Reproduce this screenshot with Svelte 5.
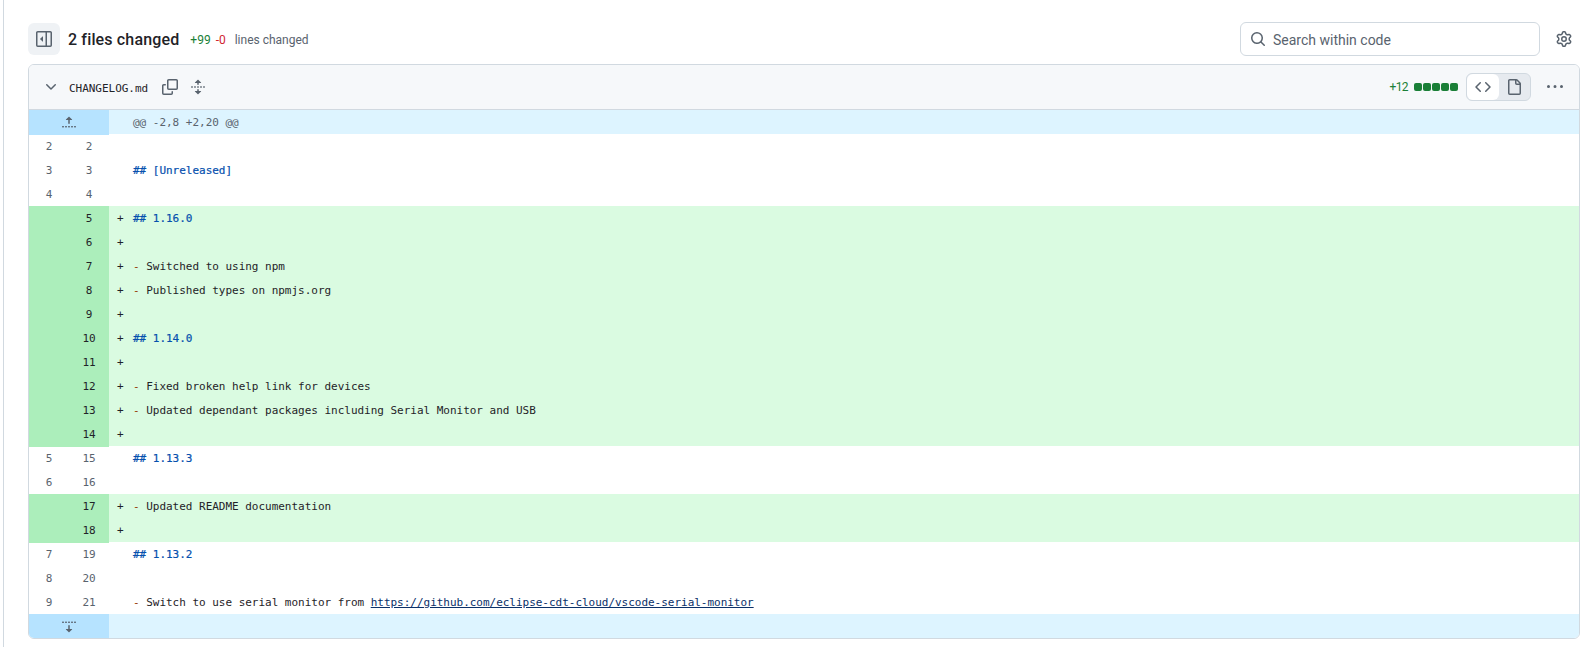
<script>
  const sidebar = 'M4.177 7.823 6.573 5.427A.25.25 0 0 1 7 5.604v4.792a.25.25 0 0 1-.427.177L4.177 8.177a.25.25 0 0 1 0-.354ZM1.75 0h12.5C15.216 0 16 .784 16 1.75v12.5A1.75 1.75 0 0 1 14.25 16H1.75A1.75 1.75 0 0 1 0 14.25V1.75C0 .784.784 0 1.75 0ZM1.5 1.75v12.5c0 .138.112.25.25.25H9.5v-13H1.75a.25.25 0 0 0-.25.25ZM11 14.5h3.25a.25.25 0 0 0 .25-.25V1.75a.25.25 0 0 0-.25-.25H11Z';
  const chevron = 'M12.78 5.22a.749.749 0 0 1 0 1.06l-4.25 4.25a.749.749 0 0 1-1.06 0L3.22 6.28a.749.749 0 1 1 1.06-1.06L8 8.939l3.72-3.719a.749.749 0 0 1 1.06 0Z';
  const copy = 'M0 6.75C0 5.784.784 5 1.75 5h1.5a.75.75 0 0 1 0 1.5h-1.5a.25.25 0 0 0-.25.25v7.5c0 .138.112.25.25.25h7.5a.25.25 0 0 0 .25-.25v-1.5a.75.75 0 0 1 1.5 0v1.5A1.75 1.75 0 0 1 9.25 16h-7.5A1.75 1.75 0 0 1 0 14.25ZM5 1.75C5 .784 5.784 0 6.75 0h7.5C15.216 0 16 .784 16 1.75v7.5A1.75 1.75 0 0 1 14.25 11h-7.5A1.75 1.75 0 0 1 5 9.25Zm1.75-.25a.25.25 0 0 0-.25.25v7.5c0 .138.112.25.25.25h7.5a.25.25 0 0 0 .25-.25v-7.5a.25.25 0 0 0-.25-.25Z';
  const unfold = 'm8.177.677 2.896 2.896a.25.25 0 0 1-.177.427H8.75v1.25a.75.75 0 0 1-1.5 0V4H5.104a.25.25 0 0 1-.177-.427L7.823.677a.25.25 0 0 1 .354 0ZM7.25 10.75a.75.75 0 0 1 1.5 0V12h2.146a.25.25 0 0 1 .177.427l-2.896 2.896a.25.25 0 0 1-.354 0l-2.896-2.896A.25.25 0 0 1 5.104 12H7.25v-1.25Zm-5-2a.75.75 0 0 0 0-1.5h-.5a.75.75 0 0 0 0 1.5h.5ZM6 8a.75.75 0 0 1-.75.75h-.5a.75.75 0 0 1 0-1.5h.5A.75.75 0 0 1 6 8Zm2.25.75a.75.75 0 0 0 0-1.5h-.5a.75.75 0 0 0 0 1.5h.5ZM12 8a.75.75 0 0 1-.75.75h-.5a.75.75 0 0 1 0-1.5h.5A.75.75 0 0 1 12 8Zm2.25.75a.75.75 0 0 0 0-1.5h-.5a.75.75 0 0 0 0 1.5h.5Z';
  const foldUp = 'M7.823 1.677 4.927 4.573A.25.25 0 0 0 5.104 5H7.25v3.236a.75.75 0 1 0 1.5 0V5h2.146a.25.25 0 0 0 .177-.427L8.177 1.677a.25.25 0 0 0-.354 0ZM13.75 11a.75.75 0 0 0 0 1.5h.5a.75.75 0 0 0 0-1.5h-.5Zm-3.75.75a.75.75 0 0 1 .75-.75h.5a.75.75 0 0 1 0 1.5h-.5a.75.75 0 0 1-.75-.75ZM7.75 11a.75.75 0 0 0 0 1.5h.5a.75.75 0 0 0 0-1.5h-.5ZM4 11.75a.75.75 0 0 1 .75-.75h.5a.75.75 0 0 1 0 1.5h-.5a.75.75 0 0 1-.75-.75ZM1.75 11a.75.75 0 0 0 0 1.5h.5a.75.75 0 0 0 0-1.5h-.5Z';
  const foldDown = 'm8.177 14.323 2.896-2.896a.25.25 0 0 0-.177-.427H8.75V7.764a.75.75 0 1 0-1.5 0V11H5.104a.25.25 0 0 0-.177.427l2.896 2.896a.25.25 0 0 0 .354 0ZM2.25 5a.75.75 0 0 0 0-1.5h-.5a.75.75 0 0 0 0 1.5h.5ZM6 4.25a.75.75 0 0 1-.75.75h-.5a.75.75 0 0 1 0-1.5h.5a.75.75 0 0 1 .75.75ZM8.25 5a.75.75 0 0 0 0-1.5h-.5a.75.75 0 0 0 0 1.5h.5ZM12 4.25a.75.75 0 0 1-.75.75h-.5a.75.75 0 0 1 0-1.5h.5a.75.75 0 0 1 .75.75Zm2.25.75a.75.75 0 0 0 0-1.5h-.5a.75.75 0 0 0 0 1.5h.5Z';
  const search = 'M10.68 11.74a6 6 0 0 1-7.922-8.982 6 6 0 0 1 8.982 7.922l3.04 3.04a.749.749 0 0 1-.326 1.275.749.749 0 0 1-.734-.215ZM11.5 7a4.499 4.499 0 1 0-8.997 0A4.499 4.499 0 0 0 11.5 7Z';
  const gear = 'M8 0a8.2 8.2 0 0 1 .701.031C9.444.095 9.99.645 10.16 1.29l.288 1.107c.018.066.079.158.212.224.231.114.454.243.668.386.123.082.233.09.299.071l1.103-.303c.644-.176 1.392.021 1.82.63.27.385.506.792.704 1.218.315.675.111 1.422-.364 1.891l-.814.806c-.049.048-.098.147-.088.294.016.257.016.515 0 .772-.01.147.038.246.088.294l.814.806c.475.469.679 1.216.364 1.891a7.977 7.977 0 0 1-.704 1.217c-.428.61-1.176.807-1.82.63l-1.102-.302c-.067-.019-.177-.011-.3.071a5.909 5.909 0 0 1-.668.386c-.133.066-.194.158-.211.224l-.29 1.106c-.168.646-.715 1.196-1.458 1.26a8.006 8.006 0 0 1-1.402 0c-.743-.064-1.289-.614-1.458-1.26l-.289-1.106c-.018-.066-.079-.158-.212-.224a5.738 5.738 0 0 1-.668-.386c-.123-.082-.233-.09-.299-.071l-1.103.303c-.644.176-1.392-.021-1.82-.63a8.12 8.12 0 0 1-.704-1.218c-.315-.675-.111-1.422.363-1.891l.815-.806c.05-.048.098-.147.088-.294a6.214 6.214 0 0 1 0-.772c.01-.147-.038-.246-.088-.294l-.815-.806C.635 6.045.431 5.298.746 4.623a7.92 7.92 0 0 1 .704-1.217c.428-.61 1.176-.807 1.82-.63l1.102.302c.067.019.177.011.3-.071.214-.143.437-.272.668-.386.133-.066.194-.158.211-.224l.29-1.106C6.009.645 6.556.095 7.299.03 7.53.01 7.764 0 8 0Zm-.571 1.525c-.036.003-.108.036-.137.146l-.289 1.105c-.147.561-.549.967-.998 1.189-.173.086-.34.183-.5.29-.417.278-.97.423-1.529.27l-1.103-.303c-.109-.03-.175.016-.195.045-.22.312-.412.644-.573.99-.014.031-.021.11.059.19l.815.806c.411.406.562.957.53 1.456a4.709 4.709 0 0 0 0 .582c.032.499-.119 1.05-.53 1.456l-.815.806c-.081.08-.073.159-.059.19.162.346.353.677.573.989.02.03.085.076.195.046l1.102-.303c.56-.153 1.113-.008 1.53.27.161.107.328.204.501.29.447.222.85.629.997 1.189l.289 1.105c.029.109.101.143.137.146a6.6 6.6 0 0 0 1.142 0c.036-.003.108-.036.137-.146l.289-1.105c.147-.561.549-.967.998-1.189.173-.086.34-.183.5-.29.417-.278.97-.423 1.529-.27l1.103.303c.109.029.175-.016.195-.045.22-.313.411-.644.573-.99.014-.031.021-.11-.059-.19l-.815-.806c-.411-.406-.562-.957-.53-1.456a4.709 4.709 0 0 0 0-.582c-.032-.499.119-1.05.53-1.456l.815-.806c.081-.08.073-.159.059-.19a6.464 6.464 0 0 0-.573-.989c-.02-.03-.085-.076-.195-.046l-1.102.303c-.56.153-1.113.008-1.53-.27a4.44 4.44 0 0 0-.501-.29c-.447-.222-.85-.629-.997-1.189l-.289-1.105c-.029-.11-.101-.143-.137-.146a6.6 6.6 0 0 0-1.142 0ZM11 8a3 3 0 1 1-6 0 3 3 0 0 1 6 0ZM9.5 8a1.5 1.5 0 1 0-3.001.001A1.5 1.5 0 0 0 9.5 8Z';
  const code = 'm11.28 3.22 4.25 4.25a.75.75 0 0 1 0 1.06l-4.25 4.25a.749.749 0 0 1-1.275-.326.749.749 0 0 1 .215-.734L13.94 8l-3.72-3.72a.749.749 0 0 1 .326-1.275.749.749 0 0 1 .734.215Zm-6.56 0a.751.751 0 0 1 1.042.018.751.751 0 0 1 .018 1.042L2.06 8l3.72 3.72a.749.749 0 0 1-.326 1.275.749.749 0 0 1-.734-.215L.47 8.53a.75.75 0 0 1 0-1.06Z';
  const file = 'M2 1.75C2 .784 2.784 0 3.75 0h6.586c.464 0 .909.184 1.237.513l2.914 2.914c.329.328.513.773.513 1.237v9.586A1.75 1.75 0 0 1 13.25 16h-9.5A1.75 1.75 0 0 1 2 14.25Zm1.75-.25a.25.25 0 0 0-.25.25v12.5c0 .138.112.25.25.25h9.5a.25.25 0 0 0 .25-.25V6h-2.75A1.75 1.75 0 0 1 9 4.25V1.5Zm6.75.062V4.25c0 .138.112.25.25.25h2.688l-.011-.013-2.914-2.914-.013-.011Z';
  const kebab = 'M8 9a1.5 1.5 0 1 0 0-3 1.5 1.5 0 0 0 0 3ZM1.5 9a1.5 1.5 0 1 0 0-3 1.5 1.5 0 0 0 0 3Zm13 0a1.5 1.5 0 1 0 0-3 1.5 1.5 0 0 0 0 3Z';

  const rows = [
    { o: 2, n: 2 },
    { o: 3, n: 3, h: '## [Unreleased]' },
    { o: 4, n: 4 },
    { n: 5, add: true, h: '## 1.16.0' },
    { n: 6, add: true },
    { n: 7, add: true, li: 'Switched to using npm' },
    { n: 8, add: true, li: 'Published types on npmjs.org' },
    { n: 9, add: true },
    { n: 10, add: true, h: '## 1.14.0' },
    { n: 11, add: true },
    { n: 12, add: true, li: 'Fixed broken help link for devices' },
    { n: 13, add: true, li: 'Updated dependant packages including Serial Monitor and USB' },
    { n: 14, add: true },
    { o: 5, n: 15, h: '## 1.13.3' },
    { o: 6, n: 16 },
    { n: 17, add: true, li: 'Updated README documentation' },
    { n: 18, add: true },
    { o: 7, n: 19, h: '## 1.13.2' },
    { o: 8, n: 20 },
    { o: 9, n: 21, li: 'Switch to use serial monitor from ', link: 'https://github.com/eclipse-cdt-cloud/vscode-serial-monitor' }
  ];
</script>

{#snippet icon(d, cls = '')}
  <svg class="icon {cls}" viewBox="0 0 16 16" width="16" height="16" aria-hidden="true"><path d={d} /></svg>
{/snippet}

<div class="page">
  <div class="toolbar">
    <button class="sidebar-btn" aria-label="Collapse file tree">{@render icon(sidebar)}</button>
    <h2 class="title">2 files changed</h2>
    <div class="summary">
      <span class="plus">+99</span>
      <span class="minus">-0</span>
      <span class="lines">lines changed</span>
    </div>
    <div class="search">
      {@render icon(search)}
      <span class="placeholder">Search within code</span>
    </div>
    <button class="icon-btn" aria-label="Settings">{@render icon(gear)}</button>
  </div>

  <div class="card">
    <div class="file-head">
      <button class="head-btn" aria-label="Collapse file">{@render icon(chevron)}</button>
      <span class="filename">CHANGELOG.md</span>
      <div class="head-tools">
        <button class="head-btn" aria-label="Copy path">{@render icon(copy)}</button>
        <button class="head-btn" aria-label="Expand all">{@render icon(unfold)}</button>
      </div>
      <div class="head-right">
        <span class="count">+12</span>
        <div class="bars">
          {#each [1, 2, 3, 4, 5] as b (b)}<span class="bar"></span>{/each}
        </div>
        <div class="segmented">
          <button class="seg on" aria-label="Code view">{@render icon(code)}</button>
          <button class="seg" aria-label="File view">{@render icon(file)}</button>
        </div>
        <button class="icon-btn" aria-label="More options">{@render icon(kebab)}</button>
      </div>
    </div>

    <div class="diff">
      <div class="row hunk">
        <div class="expander">{@render icon(foldUp)}</div>
        <div class="code hunk-text">@@ -2,8 +2,20 @@</div>
      </div>
      {#each rows as r (r.n)}
        <div class="row" class:add={r.add}>
          <div class="num">{r.o ?? ''}</div>
          <div class="num">{r.n}</div>
          <div class="code">
            <span class="marker">{r.add ? '+' : ''}</span>{#if r.h}<span class="heading">{r.h}</span>{:else if r.li}<span class="dash">-</span> {r.li}{#if r.link}<a href={r.link}>{r.link}</a>{/if}{/if}
          </div>
        </div>
      {/each}
      <div class="row hunk">
        <div class="expander">{@render icon(foldDown)}</div>
        <div class="code"></div>
      </div>
    </div>
  </div>
</div>

<style>
  :global(body) {
    background: #fff;
    color: #1f2328;
    font-family: Roboto, "Open Sans", sans-serif;
  }
  button {
    border: 0;
    background: none;
    padding: 0;
    color: inherit;
    display: flex;
    align-items: center;
    justify-content: center;
  }
  .icon {
    fill: #59636e;
    display: block;
  }
  .page {
    margin-left: 3px;
    height: 647px;
    box-sizing: border-box;
    border-left: 1px solid #d1d9e0;
    padding: 22px 5px 0 24px;
  }
  .toolbar {
    display: flex;
    align-items: center;
    height: 34px;
    margin-bottom: 8px;
  }
  .sidebar-btn {
    width: 32px;
    height: 32px;
    border-radius: 6px;
    background: #eff2f5;
    margin-right: 8px;
  }
  .title {
    margin: 2px 11px 0 0;
    font-size: 16px;
    font-weight: 500;
    letter-spacing: 0.15px;
    line-height: 20px;
    white-space: nowrap;
  }
  .summary {
    display: flex;
    gap: 5px;
    margin-top: 2px;
    font-size: 12px;
    white-space: nowrap;
  }
  .plus { color: #1a7f37; }
  .minus { color: #d1242f; }
  .lines { color: #59636e; margin-left: 4px; }
  .search {
    margin-left: auto;
    width: 300px;
    height: 34px;
    box-sizing: border-box;
    border: 1px solid #d1d9e0;
    border-radius: 6px;
    display: flex;
    align-items: center;
    gap: 7px;
    padding-left: 9px;
    font-size: 14px;
    color: #59636e;
    margin-right: 8px;
  }
  .placeholder {
    margin-top: 2px;
  }
  .icon-btn {
    width: 32px;
    height: 32px;
  }
  .card {
    border: 1px solid #d1d9e0;
    border-radius: 6px;
    overflow: hidden;
  }
  .file-head {
    height: 44px;
    background: #f6f8fa;
    border-bottom: 1px solid #d1d9e0;
    display: flex;
    align-items: center;
    padding: 0 8px;
  }
  .head-btn {
    width: 28px;
    height: 28px;
  }
  .filename {
    font-family: "DejaVu Sans Mono", "Liberation Mono", monospace;
    font-size: 11px;
    letter-spacing: -0.03px;
    margin: 3px 8px 0 4px;
  }
  .head-tools {
    display: flex;
  }
  .head-right {
    margin-left: auto;
    display: flex;
    align-items: center;
    gap: 8px;
  }
  .count {
    font-size: 12px;
    letter-spacing: -0.6px;
    color: #1a7f37;
    margin-right: -2px;
  }
  .bars {
    display: flex;
    gap: 1px;
  }
  .bar {
    width: 8px;
    height: 8px;
    border-radius: 2px;
    background: #1a7f37;
  }
  .segmented {
    display: flex;
    width: 65px;
    height: 28px;
    box-sizing: border-box;
    border: 1px solid #d1d9e0;
    border-radius: 6px;
    background: #e6eaef;
  }
  .seg {
    flex: 1;
    border-radius: 6px;
  }
  .seg.on {
    background: #fff;
  }
  .row {
    display: grid;
    grid-template-columns: 40px 40px 1fr;
    height: 24px;
    line-height: 25px;
    font-family: "DejaVu Sans Mono", "Liberation Mono", monospace;
    font-size: 11px;
    letter-spacing: -0.02px;
  }
  .row.hunk {
    grid-template-columns: 80px 1fr;
    background: #ddf4ff;
  }
  .expander {
    background: #b6e3ff;
    display: flex;
    align-items: center;
    justify-content: center;
  }
  .num {
    text-align: center;
    color: #59636e;
  }
  .add { background: #dafbe1; }
  .add .num {
    background: #aceebb;
    color: #1f2328;
  }
  .code {
    padding-left: 8px;
    white-space: pre;
  }
  .hunk-text {
    padding-left: 24px;
    color: #59636e;
  }
  .marker {
    display: inline-block;
    width: 16px;
  }
  .heading {
    color: #0550ae;
    font-weight: 400;
    -webkit-text-stroke: 0.2px #0550ae;
  }
  .dash { color: #953800; }
  a { color: #0a3069; text-decoration: underline; }
</style>
